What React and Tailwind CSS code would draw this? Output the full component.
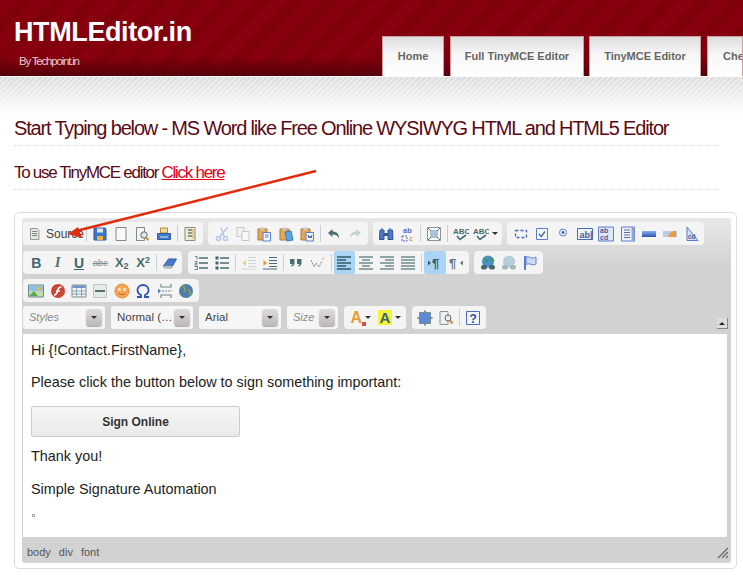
const ink = '#4a6b70';
const blue = '#5b7fd0';

function Svg({ children }) {
  return <svg width="16" height="16" viewBox="0 0 16 16" fill="none">{children}</svg>;
}

const Word = ({ children, className }) => (
  <span className={`font-['Liberation_Sans',Arial,sans-serif] font-bold leading-none ${className}`}>{children}</span>
);

const icons = {
  source: <Svg><path d="M3 1.5h8l2 2v11H3z" fill="#e8ebe2" stroke="#7d8a86" /><path d="M5 5h6M5 7.5h6M5 10h6" stroke="#59686a" /></Svg>,
  save: <Svg><path d="M2 2h11l1 1v11H2z" fill="#3c78c8" stroke="#2a5aa5" /><path d="M5 2.5h6v4H5z" fill="#dce8f6" /><path d="M5 10h6v4H5z" fill="#f0b13c" /></Svg>,
  newdoc: <Svg><path d="M3 1.5h10v13H3z" fill="#f8f8f8" stroke="#7f8c8c" /></Svg>,
  preview: <Svg><path d="M2.5 1.5h8v13h-8z" fill="#f4f4f4" stroke="#7f8c8c" /><circle cx="10" cy="9" r="3.2" fill="#d9e6ea" stroke="#667" /><path d="M12 11.5l2.5 2.5" stroke="#c98b2b" strokeWidth="2" /></Svg>,
  print: <Svg><path d="M4.5 2h7v5h-7z" fill="#f3d9a0" stroke="#b78a3a" /><path d="M1.5 7.5h13v6h-13z" fill="#3f7cc9" stroke="#2f5ea3" /><path d="M4 11h8" stroke="#d6e4f5" /></Svg>,
  templates: <Svg><path d="M3 1.5h10v13H3z" fill="#f1ead0" stroke="#8a8f83" /><path d="M6 4h4M6 7h4M6 10h4" stroke="#6d7a78" strokeWidth="1.5" /><path d="M11 3v10" stroke="#d8a84c" /></Svg>,
  cut: <Svg><path d="M14 1L6 10M7 2l3 8" stroke="#b5c6ec" strokeWidth="1.5" /><circle cx="4.5" cy="12.5" r="2" stroke="#b5c6ec" strokeWidth="1.5" /><circle cx="11.5" cy="12.5" r="2" stroke="#b5c6ec" strokeWidth="1.5" /></Svg>,
  copy: <Svg><path d="M2 1.5h7v9H2z" fill="#f2f2f2" stroke="#c2c9c9" /><path d="M7 5.5h7v9H7z" fill="#f7f7f7" stroke="#c2c9c9" /></Svg>,
  paste: <Svg><path d="M2 3h9v11H2z" fill="#e3a857" stroke="#ad7a33" /><path d="M4.5 1.5h4v3h-4z" fill="#c9c9c9" /><path d="M7 6.5h7.5v8.5H7z" fill="#f2f5fb" stroke="#5b7fd0" /><path d="M9 9h3.5M9 11h3.5" stroke="#5b7fd0" /></Svg>,
  pastetext: <Svg><path d="M2 3h9v11H2z" fill="#e3a857" stroke="#ad7a33" /><path d="M4.5 1.5h4v3h-4z" fill="#c9c9c9" /><path d="M7 6l6-1 2 9-6 1z" fill="#58a7e0" stroke="#3978b5" /></Svg>,
  pasteword: <Svg><path d="M2 3h9v11H2z" fill="#e3a857" stroke="#ad7a33" /><path d="M4.5 1.5h4v3h-4z" fill="#c9c9c9" /><path d="M7 6.5h7.5v8.5H7z" fill="#eef1f8" stroke="#5b7fd0" /><path d="M9 9l1 3 1-2 1 2 1-3" stroke="#44609c" /></Svg>,
  undo: <Svg><path d="M6.5 3L2 7l4.5 4V8.500c3 0 5 .7 6.500 4 0-5-2.500-7-6.500-7z" fill={ink} /></Svg>,
  redo: <Svg><path d="M9.500 3L14 7l-4.500 4V8.500c-3 0-5 .7-6.500 4 0-5 2.500-7 6.500-7z" fill="#c5d2d2" /></Svg>,
  find: <Svg><path d="M2 4h4v9.500H1.500zM10 4h4.500l.5 9.500h-5z" fill="#5175c9" stroke="#30528f" /><path d="M6 7h4v3H6z" fill="#35568f" /><path d="M3 2h2v2H3zM11 2h2v2h-2z" fill="#7b97d6" /></Svg>,
  replace: <Svg><text x="3" y="7" fontSize="7.500" fontWeight="700" fill="#5a68c0" fontFamily="Liberation Sans">ab</text><text x="9" y="15" fontSize="7" fontWeight="700" fill="#dd9a3d" fontFamily="Liberation Sans">c</text><path d="M2 10h5v5H2z" stroke="#5a68c0" strokeDasharray="2 1" /></Svg>,
  maximize: <Svg><path d="M1.500 1.500h13v13h-13z" fill="#fff" stroke="#8a9595" /><path d="M4 4h8v8H4z" fill="#a9bfdc" /><path d="M2 2l3 3M14 2l-3 3M2 14l3-3M14 14l-3-3" stroke="#4a6b70" /></Svg>,
  spell: <Svg><text x="0" y="8" fontSize="8" fontWeight="700" fill={ink} fontFamily="Liberation Sans">ABC</text><path d="M4 10l3 3.500L13 9" stroke={ink} strokeWidth="1.600" /></Svg>,
  form: <Svg><path d="M2.500 4.500h11v7h-11z" stroke="#4a68b5" strokeWidth="1.300" strokeDasharray="3 2" /></Svg>,
  check: <Svg><path d="M2.500 2.500h11v11h-11z" fill="#f2f5fb" stroke={blue} /><path d="M5 8l2.300 2.500L11 5.500" stroke="#44609c" strokeWidth="1.300" /></Svg>,
  radio: <Svg><circle cx="8" cy="6.500" r="3.500" fill="#f2f5fb" stroke={blue} /><circle cx="8" cy="6.500" r="1.400" fill="#44609c" /></Svg>,
  textfield: <Svg><path d="M.5 2.500h15v11H.5z" fill="#eef2fa" stroke="#4a68b5" /><text x="2.500" y="11.500" fontSize="9" fontWeight="700" fill="#44609c" fontFamily="Liberation Sans">ab|</text></Svg>,
  textarea: <Svg><path d="M.5 1h15v14H.5z" fill="#dfe7f7" stroke={blue} /><text x="2" y="7" fontSize="7" fontWeight="700" fill="#44609c" fontFamily="Liberation Sans">ab</text><text x="2" y="13.500" fontSize="7" fontWeight="700" fill="#44609c" fontFamily="Liberation Sans">cd</text></Svg>,
  select: <Svg><path d="M1.500 1h13v14h-13z" fill="#eef2fa" stroke={blue} /><path d="M4 4h6M4 6.500h6M4 9h6M4 11.500h6" stroke="#5c6fa5" /><path d="M11.500 1.500h3v13h-3z" fill="#8ea7de" /><path d="M12 3h2" stroke="#d9822b" /></Svg>,
  button: <Svg><defs><linearGradient id="btnG" x1="0" y1="0" x2="0" y2="1"><stop offset="0" stopColor="#8fb0ea" /><stop offset="1" stopColor="#2a52b5" /></linearGradient></defs><path d="M1 5h14v6H1z" fill="url(#btnG)" /></Svg>,
  imagebutton: <Svg><path d="M1 5h14v6H1z" fill="#b9cbea" /><path d="M6 11c1-4 4-6 8-6v6z" fill="#eb9a3d" /></Svg>,
  hidden: <Svg><path d="M3 1l11 13.500H3z" fill="#d6dff3" stroke={blue} /><text x="4" y="13" fontSize="6.500" fontWeight="700" fill="#44609c" fontFamily="Liberation Sans">cd</text></Svg>,
  bold: <Word className="text-[14px] text-[#3f6470]">B</Word>,
  italic: <span className="font-['Liberation_Serif',serif] text-[15px] font-bold italic leading-none text-[#59727a]">I</span>,
  underline: <Word className="text-[14px] text-[#3f6470] underline">U</Word>,
  strike: <span className="font-['Liberation_Sans',sans-serif] text-[9.500px] leading-none text-[#7a8f92] line-through">abc</span>,
  sub: <Word className="text-[13px] text-[#4a6b70]">X<sub className="text-[9px]">2</sub></Word>,
  sup: <Word className="text-[13px] text-[#4a6b70]">X<sup className="text-[9px]">2</sup></Word>,
  eraser: <Svg><path d="M1.500 11l5-7h8l-4 7z" fill="#4a78cc" stroke="#365a9e" /><path d="M1.500 11h9l-1 2h-7z" fill="#dfe5ef" stroke="#8a9595" /></Svg>,
  numlist: <Svg><path d="M6 3h9M6 8h9M6 13h9" stroke={ink} strokeWidth="1.300" /><path d="M2 1.500h2v3M1.500 6.500h2.500v2H2v1.500h2.500M1.500 11.500h3v3h-3" stroke="#59727a" strokeWidth=".9" /></Svg>,
  bullist: <Svg><path d="M6 3h9M6 8h9M6 13h9" stroke={ink} strokeWidth="1.300" /><path d="M1.500 1.500h3v3h-3zM1.500 6.500h3v3h-3zM1.500 11.500h3v3h-3z" fill="#3f6470" /></Svg>,
  outdent: <Svg><path d="M7 2.500h8M7 5.500h8M7 8.500h8M7 11.500h8M1 14h14" stroke="#cfd8d8" /><path d="M5 5L1.500 8 5 11z" fill="#f0c690" /></Svg>,
  indent: <Svg><path d="M7 2.500h8M7 5.500h8M7 8.500h8M7 11.500h8M1 14h14" stroke={ink} /><path d="M1.500 5L5 8l-3.500 3z" fill="#e8963a" /></Svg>,
  quote: <Svg><path d="M2 4h4.500v4c0 2-1 3-3 3.500l-.5-1c1-.3 1.500-1 1.500-1.500H2zM9 4h4.500v4c0 2-1 3-3 3.500l-.5-1c1-.3 1.500-1 1.500-1.500H9z" fill={ink} /></Svg>,
  creatediv: <Svg><path d="M1 5l3 7 2-4 3 4 3-6" stroke="#7a8f92" strokeDasharray="2 1" /><path d="M13 2l1 2-2 1z" fill="#d7a45a" /></Svg>,
  left: <Svg><path d="M1 2h14M1 5h9M1 8h14M1 11h9M1 14h14" stroke="#2f5c68" strokeWidth="1.400" /></Svg>,
  center: <Svg><path d="M1 2h14M4 5h8M1 8h14M4 11h8M1 14h14" stroke="#6f8a8c" strokeWidth="1.400" /></Svg>,
  right: <Svg><path d="M1 2h14M6 5h9M1 8h14M6 11h9M1 14h14" stroke="#6f8a8c" strokeWidth="1.400" /></Svg>,
  justify: <Svg><path d="M1 2h14M1 5h14M1 8h14M1 11h14M1 14h14" stroke="#6f8a8c" strokeWidth="1.400" /></Svg>,
  ltr: <Svg><path d="M1 5.500L4 8l-3 2.500z" fill="#2f5c68" /><text x="5" y="13" fontSize="13" fontWeight="700" fill="#2f5c68" fontFamily="Liberation Sans">¶</text></Svg>,
  rtl: <Svg><text x="1" y="13" fontSize="13" fontWeight="700" fill="#5d7a80" fontFamily="Liberation Sans">¶</text><path d="M15 5.500L12 8l3 2.500z" fill="#5d7a80" /></Svg>,
  link: <Svg><circle cx="8" cy="6.500" r="6" fill="#4a8fcf" /><path d="M4 3c2 1 3 3 2 5M10 2c1 2 3 2 3.500 4" stroke="#3f9a5e" strokeWidth="2" /><rect x="1" y="10" width="6" height="4.500" rx="2" fill="#48676b" /><rect x="9" y="10" width="6" height="4.500" rx="2" fill="#48676b" /></Svg>,
  unlink: <Svg><circle cx="8" cy="6.500" r="6" fill="#b5cde0" /><path d="M4 3c2 1 3 3 2 5M10 2c1 2 3 2 3.500 4" stroke="#b5d3bf" strokeWidth="2" /><rect x="1" y="10" width="6" height="4.500" rx="2" fill="#a8b8ba" /><rect x="9" y="10" width="6" height="4.500" rx="2" fill="#a8b8ba" /></Svg>,
  flag: <Svg><path d="M3 1v14" stroke={blue} strokeWidth="2" /><path d="M4 2c3-1 4 1 6 1s3-.5 4-1v7c-2 1.500-4 .5-6 0s-3 0-4 .5z" fill="#cfdaf3" stroke={blue} /></Svg>,
  image: <Svg><path d="M.5 2h15v12H.5z" fill="#bfe0a8" stroke="#6f8a8c" /><path d="M1 2.500h14V8H1z" fill="#8fc0ea" /><circle cx="11" cy="5.500" r="2" fill="#f2b544" /><path d="M1 13l5-5 4 5z" fill="#5da35a" /></Svg>,
  flash: <Svg><circle cx="8" cy="8" r="7" fill="#cc4433" /><path d="M11.500 4C8 4 8 6 7.500 8S6.500 12 4 12M6 8h4" stroke="#fff" strokeWidth="1.600" /></Svg>,
  table: <Svg><path d="M1 2h14v12H1z" fill="#f3f6fa" stroke="#7f8c8c" /><path d="M1.500 2.500h13V5h-13z" fill="#6f93c9" /><path d="M1 8h14M1 11h14M5.500 5v9M10.500 5v9" stroke="#8ea4b5" /></Svg>,
  hr: <Svg><path d="M1.500 1.500h13v13h-13z" fill="#e5ebe7" stroke="#b9c4c0" /><path d="M3 8h10" stroke="#56706f" strokeWidth="2" /></Svg>,
  smiley: <Svg><circle cx="8" cy="8" r="7" fill="#f5a653" stroke="#e38c33" /><circle cx="5.500" cy="6.500" r="1.300" fill="#fff" /><circle cx="10.500" cy="6.500" r="1.300" fill="#fff" /><path d="M4.500 10c1.500 2 5.500 2 7 0" stroke="#b5601f" /></Svg>,
  omega: <Svg><path d="M2 14h4v-2C3.500 11 2.500 9 2.500 7c0-3 2.500-5 5.500-5s5.500 2 5.500 5c0 2-1 4-3.500 5v2h4" stroke="#2f50b5" strokeWidth="1.800" /></Svg>,
  pagebreak: <Svg><path d="M4 1v3h10V1M4 15v-3h10v3" stroke="#6f8a8c" strokeWidth="1.200" /><path d="M5 8h10" stroke="#6f8a8c" strokeDasharray="2 1" /><path d="M1 5.500L4 8l-3 2.500z" fill="#4f7fc9" /></Svg>,
  iframe: <Svg><circle cx="8" cy="8" r="7" fill="#4d7eaa" /><path d="M4 3c3 1 4 3 2 6M10 7c2 0 3 2 2 5" stroke="#7d9a63" strokeWidth="2.200" /></Svg>,
  textcolor: <span className="relative font-['Liberation_Sans',sans-serif] text-[16px] font-bold leading-none text-[#eb9a3d]">A<span className="absolute bottom-0 -right-1 h-1 w-1 bg-[#d94f3d]" /></span>,
  bgcolor: <span className="bg-[#f5f23a] px-0.5 font-['Liberation_Sans',sans-serif] text-[15px] font-bold leading-none text-[#3f6470]">A</span>,
  visual: <Svg><path d="M8 .5v3M8 12.500v3M.5 8h3M12.500 8h3" stroke="#56706f" strokeWidth="1.500" /><path d="M2.500 2.500h11v11h-11z" fill="#5b8bd8" stroke="#7f8c8c" /></Svg>,
  showblocks: <Svg><path d="M2 1.500h8v13H2z" fill="#f0f0f0" stroke="#8a9595" /><circle cx="10" cy="8" r="3" fill="#e4ecec" stroke="#667" /><path d="M12 10.500l2.500 3" stroke="#d08f2f" strokeWidth="2" /></Svg>,
  help: <Svg><path d="M1.500 1.500h13v13h-13z" fill="#f2f5fb" stroke="#4a68b5" /><text x="4.500" y="13" fontSize="12" fontWeight="700" fill="#2f50a5" fontFamily="Liberation Sans">?</text></Svg>,
};

const Sep = () => <span className="mx-[2px] h-[17px] w-px bg-[#c9cfcf]" />;

const Caret = () => <span className="h-0 w-0 border-x-[3px] border-t-[3px] border-x-transparent border-t-[#333]" />;

function Tool({ name, active, arrow }) {
  return (
    <span className={`flex h-[23px] items-center justify-center rounded-[2px] ${arrow ? 'w-[28.7px] gap-[3px]' : 'w-[21.4px]'} ${active ? 'bg-[#a9d4f5]' : ''}`}>
      {icons[name]}
      {arrow && <Caret />}
    </span>
  );
}

function Group({ items, children }) {
  return (
    <div className="flex h-[23px] items-center rounded-[4px] bg-[#f4f4f4] pl-[2.500px] pr-[2px]">
      {children}
      {items.map((it, i) =>
        it === '|' ? <Sep key={i} /> : typeof it === 'string' ? <Tool key={i} name={it} /> : <Tool key={i} {...it} />
      )}
    </div>
  );
}

function Combo({ label, italic, w, textW, size }) {
  return (
    <div className={`flex h-[23px] items-center rounded-[3px] bg-[#f6f6f6] pl-[6px] ${w}`}>
      <span className={`${textW} ${size} whitespace-nowrap ${italic ? 'italic text-[#8a8a8a]' : 'text-[#444]'}`}>{label}</span>
      <span className="flex h-[17px] w-[16px] items-center justify-center rounded-[3px] bg-linear-to-b from-[#e0dcdc] to-[#bdb8b8] shadow-[0_1px_1px_#aaa]">
        <Caret />
      </span>
    </div>
  );
}

function Tab({ label, w, pl }) {
  return (
    <div className={`flex h-[40px] shrink-0 items-center border border-b-0 border-[#cf9ea2] ${w} ${pl} bg-linear-to-b from-[#dedede] via-[#f7f7f7] via-45% to-white text-[11px] font-bold text-[#666]`}>
      {label}
    </div>
  );
}

export default function App() {
  return (
    <div className="relative h-[575px] w-[743px] overflow-hidden bg-white font-['Liberation_Sans',Arial,sans-serif]">
      <div className="flex h-[76px] justify-between bg-[linear-gradient(to_bottom,transparent_75%,#55000a_100%),repeating-linear-gradient(135deg,#87000f_0,#87000f_13px,#7d000b_13px,#7d000b_24px)]">
        <div className="pl-[14px] pt-[16px]">
          <div className="text-[27px] font-bold leading-[32px] tracking-[-0.4px] text-white">HTMLEditor.in</div>
          <div className="ml-[5px] mt-[6px] whitespace-nowrap text-[11.500px] leading-[14px] tracking-[-1.2px] text-[#ecc9cd]">By Techpoint.in</div>
        </div>
        <div className="flex self-end">
          <Tab label="Home" w="w-[62px]" pl="justify-center" />
          <Tab label="Full TinyMCE Editor" w="ml-[6px] w-[134px]" pl="justify-center" />
          <Tab label="TinyMCE Editor" w="ml-[5px] w-[112px]" pl="justify-center" />
          <Tab label="Check" w="ml-[6px] w-[36px]" pl="overflow-hidden pl-[15px]" />
        </div>
      </div>

      <div className="h-[135px] border-t border-white bg-[linear-gradient(to_bottom,transparent,#fff_38px),repeating-linear-gradient(135deg,#dcdcdc_0,#dcdcdc_2px,#e9e9e9_2px,#e9e9e9_4px)] pl-[14px] pr-[23px]">
        <div className="whitespace-nowrap border-b border-dotted border-[#ddd] pb-[2px] pt-[37px] text-[20px] leading-[29px] tracking-[-1.17px] text-[#5a0a14]">
          Start Typing below - MS Word like Free Online WYSIWYG HTML and HTML5 Editor
        </div>
        <div className="border-b border-dotted border-[#ddd] pb-[5px] pt-[16px] text-[17px] leading-[22px] tracking-[-1.28px] text-[#5a0a14]">
          To use TinyMCE editor <span className="text-[#e0001a] underline">Click here</span>
        </div>
      </div>

      <div className="ml-[14px] mt-[1px] h-[357px] w-[723px] rounded-[5px] border border-[#dcdcdc] p-[5px] pl-[7px]">
        <div className="flex h-[345px] w-[709px] flex-col rounded-[3px] bg-[#d2d2d2] bg-linear-to-b from-[#e8e8e8] to-[#d2d2d2] to-[50px] pl-px">
          <div className="mt-[4px] flex gap-[5.500px]">
            <Group items={['|', 'save', 'newdoc', 'preview', 'print', '|', 'templates']}>
              <span className="flex h-[23px] w-[58.500px] items-center gap-[5px] pl-[2px]">
                {icons.source}
                <span className="text-[12px] text-[#444]">Source</span>
              </span>
            </Group>
            <Group items={['cut', 'copy', 'paste', 'pastetext', 'pasteword', '|', 'undo', 'redo']} />
            <Group items={['find', 'replace', '|', 'maximize', '|', 'spell', { name: 'spell', arrow: true }]} />
            <Group items={['form', 'check', 'radio', 'textfield', 'textarea', 'select', 'button', 'imagebutton', 'hidden']} />
          </div>
          <div className="mt-[6px] flex gap-[5.500px]">
            <Group items={['bold', 'italic', 'underline', 'strike', 'sub', 'sup', '|', 'eraser']} />
            <Group items={['numlist', 'bullist', '|', 'outdent', 'indent', '|', 'quote', 'creatediv', '|', { name: 'left', active: true }, 'center', 'right', 'justify', '|', { name: 'ltr', active: true }, 'rtl']} />
            <Group items={['link', 'unlink', 'flag']} />
          </div>
          <div className="mt-[5px] flex">
            <Group items={['image', 'flash', 'table', 'hr', 'smiley', 'omega', 'pagebreak', 'iframe']} />
          </div>
          <div className="relative mt-[4px] flex gap-[6px]">
            <Combo label="Styles" italic w="w-[82px]" textW="w-[57px]" size="text-[11px]" />
            <Combo label="Normal (…" w="w-[82px]" textW="w-[57px]" size="text-[11.500px]" />
            <Combo label="Arial" w="w-[82px]" textW="w-[57px]" size="text-[11.500px]" />
            <Combo label="Size" italic w="w-[51px]" textW="w-[26px]" size="text-[11px]" />
            <Group items={[{ name: 'textcolor', arrow: true }, { name: 'bgcolor', arrow: true }]} />
            <Group items={['visual', 'showblocks', '|', 'help']} />
            {/* collapse toggle */}
            <span className="absolute right-[3px] top-[12px] flex h-[11px] w-[11px] items-center justify-center border-b border-r border-[#888] bg-[#dcdcdc]">
              <span className="h-0 w-0 border-x-[3px] border-b-[3px] border-x-transparent border-b-[#222]" />
            </span>
          </div>

          <div className="mt-[5px] h-[203px] w-[704px] bg-white pl-[8px] pt-[6px] text-[14.400px] leading-[20px] text-[#222]">
            <p>Hi {'{'}!Contact.FirstName{'}'},</p>
            <p className="mt-[12px]">Please click the button below to sign something important:</p>
            <div className="mt-[14px] flex h-[31px] w-[209px] items-center justify-center rounded-[2px] border border-[#ccc] bg-linear-to-b from-[#f6f6f6] to-[#eaeaea] text-[12px] font-bold text-[#333]">
              Sign Online
            </div>
            <p className="mt-[9px]">Thank you!</p>
            <p className="mt-[13px]">Simple Signature Automation</p>
            <div className="ml-px mt-[15px] h-[3px] w-[3px] border border-[#aaa]" />
          </div>

          <div className="flex flex-1 items-center justify-between pl-[4px] pr-[2px] pt-[5px]">
            <span className="flex gap-[8px] text-[11px] text-[#555]">
              <span>body</span>
              <span>div</span>
              <span>font</span>
            </span>
            <svg width="12" height="12" viewBox="0 0 12 12" fill="none">
              <path d="M1 11L11 1M5 11l6-6M9 11l2-2" stroke="#666" strokeWidth="1.200" />
            </svg>
          </div>
        </div>
      </div>

      {/* red annotation arrow drawn over the page */}
      <svg className="absolute left-0 top-0" width="743" height="575" fill="none">
        <path d="M316 171L76 231" stroke="#e32a0a" strokeWidth="2.500" />
        <path d="M68 234L78 227L82 238z" fill="#e32a0a" />
      </svg>
    </div>
  );
}
